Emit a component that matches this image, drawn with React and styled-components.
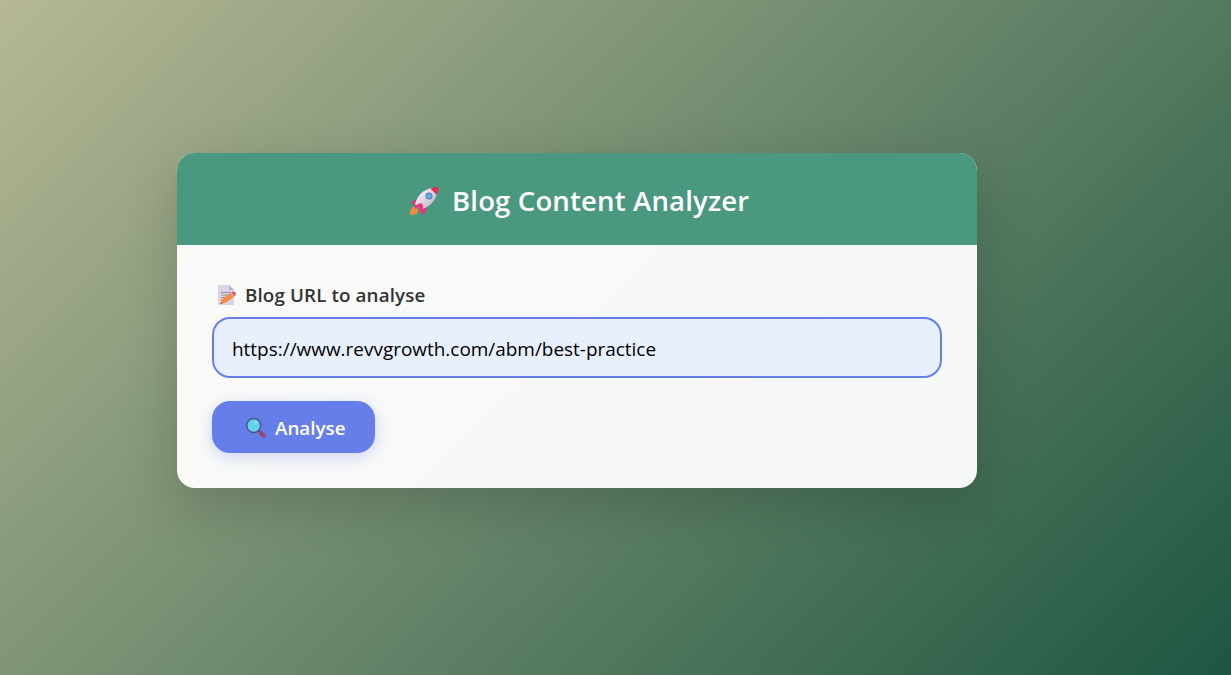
import { useState } from "react";
import styled, { createGlobalStyle } from "styled-components";

const GlobalStyle = createGlobalStyle`
  body {
    margin: 0;
    font-family: "Open Sans", "Noto Sans", sans-serif;
  }
`;

const Page = styled.div`
  box-sizing: border-box;
  height: 100vh;
  padding: 153px 254px 0 177px;
  overflow: hidden;
  background: linear-gradient(135deg, #b6b894 0%, #1e5642 100%);
`;

const Card = styled.main`
  width: 800px;
  height: 335px;
  border-radius: 18px;
  overflow: hidden;
  background: rgba(255, 255, 255, 0.95);
  box-shadow: 0 18px 54px rgba(0, 0, 0, 0.17);
`;

const Header = styled.header`
  height: 92px;
  padding: 4px 0 0 232px;
  display: flex;
  align-items: center;
  box-sizing: border-box;
  background: #4b9881;
  color: #ffffff;
`;

const Title = styled.h1`
  margin: 0 0 0 13px;
  font-size: 27.5px;
  font-weight: 600;
  line-height: 38px;
  letter-spacing: 0.17px;
  white-space: nowrap;
`;

const Form = styled.form`
  padding: 35px;
`;

const Label = styled.label`
  height: 30px;
  margin-bottom: 7px;
  padding-left: 5px;
  display: flex;
  align-items: center;
  gap: 8px;
  font-size: 18.8px;
  font-weight: 600;
  line-height: 26px;
  color: #333333;
  white-space: nowrap;
`;

const LabelText = styled.span`
  letter-spacing: 0.12px;
`;

const Input = styled.input`
  display: block;
  box-sizing: border-box;
  width: 100%;
  height: 61px;
  padding: 3px 18px 0;
  border: 2px solid #667eea;
  border-radius: 18px;
  outline: none;
  background: #e8f0fe;
  color: #000000;
  font-family: inherit;
  font-size: 18.95px;
`;

const Button = styled.button`
  width: 163px;
  height: 52px;
  margin-top: 23px;
  padding: 1px 0 0 33px;
  display: flex;
  align-items: center;
  gap: 8px;
  border: 0;
  border-radius: 18px;
  background: #667eea;
  box-shadow: 0 4px 15px rgba(102, 126, 234, 0.3);
  color: #ffffff;
  font-family: inherit;
  font-size: 18.8px;
  font-weight: 600;
  cursor: pointer;
`;

const Icon = styled.svg`
  flex: none;
  width: ${(props) => props.$size}px;
  height: ${(props) => props.$size}px;
`;

const RocketIcon = () => (
  <Icon $size={30} viewBox="0 0 30 30">
    <defs>
      <linearGradient id="hull" x1="0" y1="0" x2="1" y2="1">
        <stop offset="0.2" stopColor="#f2edf5" />
        <stop offset="1" stopColor="#b9a9c4" />
      </linearGradient>
    </defs>
    <path d="M6 20.5C2 21 1 24 1 29c4.5 0 8-.5 8-5Z" fill="#f58a3a" />
    <path d="M10 13C5.5 13 4 15 2.5 18l5 1ZM17 20c1.5 4-1 6.5-3.5 9L11 23Z" fill="#e82f72" />
    <path d="M24 2C14 3 9 9 6 18l6 6C21 20 27 15 28 6Z" fill="url(#hull)" />
    <path d="M21.5 2.8C24 1.5 28 .7 29 1.2c.5 1 0 5-1.6 7.3Z" fill="#ed2654" />
    <path d="M12.5 17c-4 1-7 2.5-7.5 4.5 0 1 1 1 2 .5l3-1c-.5 3 1.5 5 3.5 7 .5-4 1.5-8-1-11Z" fill="#f83279" />
    <circle cx="20" cy="10" r="3.5" fill="#62769b" />
    <circle cx="20" cy="10" r="2.5" fill="#5dabf3" />
  </Icon>
);

const MemoIcon = () => (
  <Icon $size={20} viewBox="0 0 20 20">
    <path d="M1 0h11l5 5v15H1Z" fill="#dcd4e4" />
    <path d="M12 0v5h5Z" fill="#b9adc7" />
    <path d="M4 7.5h10M4 10h9M4 12.5h6M4 15h3" stroke="#9c91a9" strokeWidth="1" />
    <path d="m3.5 19 1.3-4.5 9-6.5 3.3 3.7-9 6.4Z" fill="#f98a43" />
    <path d="m13 8.6 1.7-1.2 3.3 3.7-1.7 1.2Z" fill="#bba9bf" />
    <path d="m14.5 7.5 1.2-.8c1.6-.7 4 1.8 2.9 3.3l-1 .9Z" fill="#f64c43" />
    <path d="m3.5 19 .5-1.8 1.5 1.3Z" fill="#684050" />
  </Icon>
);

const SearchIcon = () => (
  <Icon $size={22} viewBox="0 0 22 22">
    <path d="m13.5 13.5 2 2" stroke="#53466f" strokeWidth="2" />
    <path d="m15.8 15.9 2.9 2.7" stroke="#8c4e79" strokeWidth="4.3" strokeLinecap="round" />
    <circle cx="8.7" cy="8.5" r="7" fill="#63d2eb" stroke="#49558b" strokeWidth="1.5" />
    <circle cx="11" cy="5.5" r="1.2" fill="#a5edf7" />
  </Icon>
);

const App = () => {
  const [url, setUrl] = useState("https://www.revvgrowth.com/abm/best-practice");

  return (
    <Page>
      <GlobalStyle />
      <Card>
        <Header>
          <RocketIcon />
          <Title>Blog Content Analyzer</Title>
        </Header>
        <Form onSubmit={(e) => e.preventDefault()}>
          <Label htmlFor="blog-url">
            <MemoIcon />
            <LabelText>Blog URL to analyse</LabelText>
          </Label>
          <Input
            id="blog-url"
            value={url}
            spellCheck={false}
            onChange={(e) => setUrl(e.target.value)}
          />
          <Button type="submit">
            <SearchIcon />
            Analyse
          </Button>
        </Form>
      </Card>
    </Page>
  );
};

export default App;
